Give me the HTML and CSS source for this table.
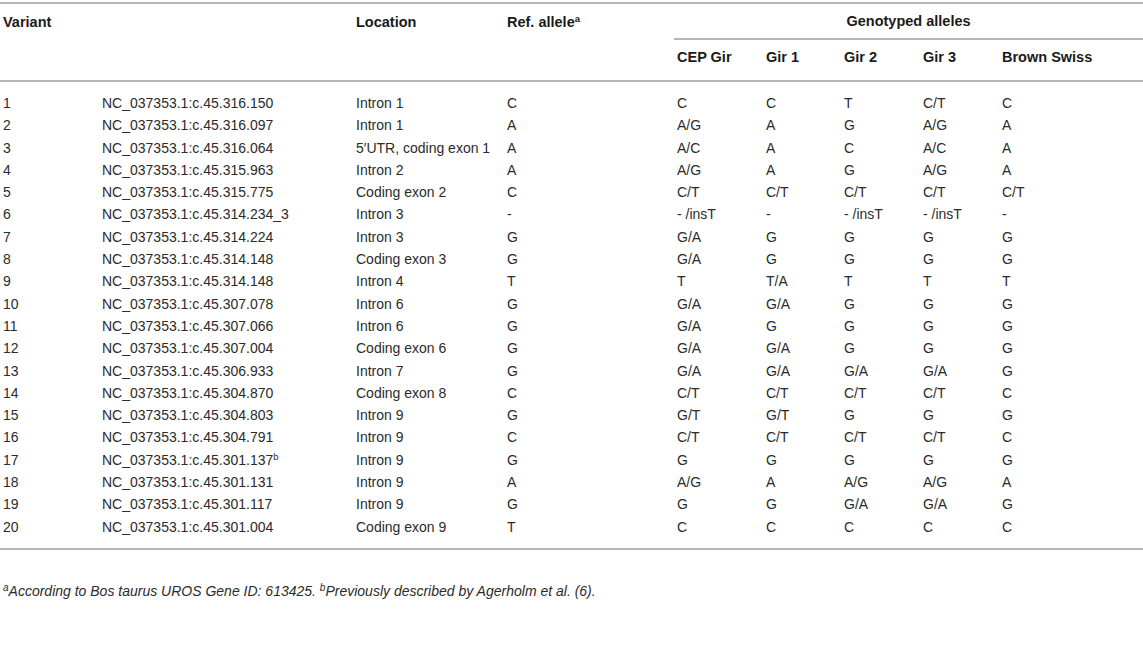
FILE: index.html
```html
<!DOCTYPE html>
<html>
<head>
<meta charset="utf-8">
<link rel="stylesheet" href="styles.css">
</head>
<body>
<div class="wrap">
<table class="tbl">
<colgroup>
<col class="c1"><col class="c2"><col class="c3"><col class="c4"><col class="c5"><col class="c6"><col class="c7"><col class="c8"><col class="c9">
</colgroup>
<thead>
<tr class="h1">
<th>Variant</th><th></th><th>Location</th><th>Ref. allele<sup>a</sup></th>
<th colspan="5" class="group">Genotyped alleles</th>
</tr>
<tr class="h2">
<th></th><th></th><th></th><th></th>
<th class="sub">CEP Gir</th><th class="sub">Gir 1</th><th class="sub">Gir 2</th><th class="sub">Gir 3</th><th class="sub">Brown Swiss</th>
</tr>
</thead>
<tbody>
<tr><td>1</td><td>NC_037353.1:c.45.316.150</td><td>Intron 1</td><td>C</td><td>C</td><td>C</td><td>T</td><td>C/T</td><td>C</td></tr>
<tr><td>2</td><td>NC_037353.1:c.45.316.097</td><td>Intron 1</td><td>A</td><td>A/G</td><td>A</td><td>G</td><td>A/G</td><td>A</td></tr>
<tr><td>3</td><td>NC_037353.1:c.45.316.064</td><td>5′UTR, coding exon 1</td><td>A</td><td>A/C</td><td>A</td><td>C</td><td>A/C</td><td>A</td></tr>
<tr><td>4</td><td>NC_037353.1:c.45.315.963</td><td>Intron 2</td><td>A</td><td>A/G</td><td>A</td><td>G</td><td>A/G</td><td>A</td></tr>
<tr><td>5</td><td>NC_037353.1:c.45.315.775</td><td>Coding exon 2</td><td>C</td><td>C/T</td><td>C/T</td><td>C/T</td><td>C/T</td><td>C/T</td></tr>
<tr><td>6</td><td>NC_037353.1:c.45.314.234_3</td><td>Intron 3</td><td>-</td><td>- /insT</td><td>-</td><td>- /insT</td><td>- /insT</td><td>-</td></tr>
<tr><td>7</td><td>NC_037353.1:c.45.314.224</td><td>Intron 3</td><td>G</td><td>G/A</td><td>G</td><td>G</td><td>G</td><td>G</td></tr>
<tr><td>8</td><td>NC_037353.1:c.45.314.148</td><td>Coding exon 3</td><td>G</td><td>G/A</td><td>G</td><td>G</td><td>G</td><td>G</td></tr>
<tr><td>9</td><td>NC_037353.1:c.45.314.148</td><td>Intron 4</td><td>T</td><td>T</td><td>T/A</td><td>T</td><td>T</td><td>T</td></tr>
<tr><td>10</td><td>NC_037353.1:c.45.307.078</td><td>Intron 6</td><td>G</td><td>G/A</td><td>G/A</td><td>G</td><td>G</td><td>G</td></tr>
<tr><td>11</td><td>NC_037353.1:c.45.307.066</td><td>Intron 6</td><td>G</td><td>G/A</td><td>G</td><td>G</td><td>G</td><td>G</td></tr>
<tr><td>12</td><td>NC_037353.1:c.45.307.004</td><td>Coding exon 6</td><td>G</td><td>G/A</td><td>G/A</td><td>G</td><td>G</td><td>G</td></tr>
<tr><td>13</td><td>NC_037353.1:c.45.306.933</td><td>Intron 7</td><td>G</td><td>G/A</td><td>G/A</td><td>G/A</td><td>G/A</td><td>G</td></tr>
<tr><td>14</td><td>NC_037353.1:c.45.304.870</td><td>Coding exon 8</td><td>C</td><td>C/T</td><td>C/T</td><td>C/T</td><td>C/T</td><td>C</td></tr>
<tr><td>15</td><td>NC_037353.1:c.45.304.803</td><td>Intron 9</td><td>G</td><td>G/T</td><td>G/T</td><td>G</td><td>G</td><td>G</td></tr>
<tr><td>16</td><td>NC_037353.1:c.45.304.791</td><td>Intron 9</td><td>C</td><td>C/T</td><td>C/T</td><td>C/T</td><td>C/T</td><td>C</td></tr>
<tr><td>17</td><td>NC_037353.1:c.45.301.137<sup>b</sup></td><td>Intron 9</td><td>G</td><td>G</td><td>G</td><td>G</td><td>G</td><td>G</td></tr>
<tr><td>18</td><td>NC_037353.1:c.45.301.131</td><td>Intron 9</td><td>A</td><td>A/G</td><td>A</td><td>A/G</td><td>A/G</td><td>A</td></tr>
<tr><td>19</td><td>NC_037353.1:c.45.301.117</td><td>Intron 9</td><td>G</td><td>G</td><td>G</td><td>G/A</td><td>G/A</td><td>G</td></tr>
<tr><td>20</td><td>NC_037353.1:c.45.301.004</td><td>Coding exon 9</td><td>T</td><td>C</td><td>C</td><td>C</td><td>C</td><td>C</td></tr>
</tbody>
</table>
<p class="note"><sup>a</sup>According to Bos taurus UROS Gene ID: 613425. <sup>b</sup>Previously described by Agerholm et al. (6).</p>
</div>
</body>
</html>
```
FILE: styles.css
```css
html, body {
  margin: 0;
  padding: 0;
  background: #fff;
}
body {
  font-family: "Liberation Sans", Arial, Helvetica, sans-serif;
  color: #2b2b2b;
}
.wrap {
  padding-top: 2px;
  width: 1143px;
}
.tbl {
  width: 1143px;
  border-collapse: collapse;
  table-layout: fixed;
  font-size: 14px;
  border-top: 2px solid #b5b5b5;
  border-bottom: 2px solid #b5b5b5;
}
.c1 { width: 99px; }
.c2 { width: 254px; }
.c3 { width: 151px; }
.c4 { width: 170px; }
.c5 { width: 89px; }
.c6 { width: 78px; }
.c7 { width: 79px; }
.c8 { width: 79px; }
.c9 { width: 144px; }
th {
  text-align: left;
  font-weight: bold;
  font-size: 14.5px;
  color: #1a1a1a;
  padding: 0 0 0 3px;
  line-height: 17px;
  white-space: nowrap;
  vertical-align: middle;
}
.h1 th {
  padding-top: 9px;
  padding-bottom: 8px;
}
.h1 th.group {
  text-align: center;
  border-bottom: 2px solid #b5b5b5;
  padding-left: 0;
}
.h2 th {
  padding-top: 9px;
  padding-bottom: 14px;
}
thead tr.h2 {
  border-bottom: 2px solid #b5b5b5;
}
sup {
  font-size: 9.5px;
  line-height: 0;
  vertical-align: 5px;
}
td {
  padding: 4px 0 4px 3px;
  line-height: 14.3px;
  white-space: nowrap;
}
tbody tr:first-child td {
  padding-top: 14px;
}
tbody tr:last-child td {
  padding-bottom: 14px;
}
.note {
  margin: 33px 0 0 3px;
  font-size: 14px;
  font-style: italic;
  color: #2b2b2b;
}
.note sup {
  font-size: 10px;
}
```
